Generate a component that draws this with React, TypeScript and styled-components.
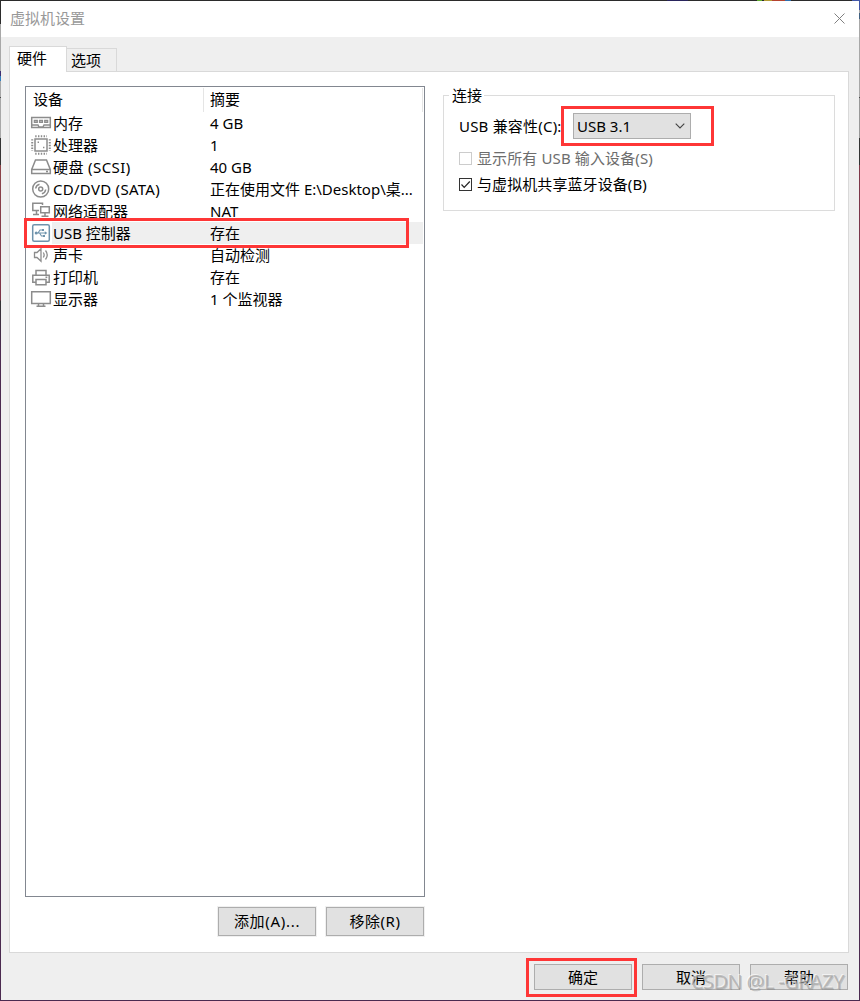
import React from "react";
import styled, { createGlobalStyle, css } from "styled-components";

const Global = createGlobalStyle`
  * { box-sizing: border-box; }
  html, body { margin: 0; padding: 0; }
  body {
    font-family: "Noto Sans", "Noto Sans CJK SC", sans-serif;
    font-size: 15px;
    line-height: 22px;
    color: #000;
    overflow: hidden;
  }
`;

const Desktop = styled.div`
  width: 860px;
  height: 1001px;
  padding: 1px;
  background:
    linear-gradient(90deg, #2b2b2b 0 667px, #29245c 667px 688px, #2b2b2b 688px 757px, #5fae2e 757px 762px, #2b2b2b 762px 764px, #b39a35 764px 772px, #b5432f 772px 785px, #2f6fae 785px 791px, #2b2b2b 791px 852px, #4257a8 852px) top / 100% 1px no-repeat,
    linear-gradient(180deg, #2b2b2b 0 24px, #a8a8a8 24px 71px, #3b2f72 71px 76px, #2f7fc0 76px 81px, #a8a8a8 81px 97px, #4a4a4a 97px 98px, #a8a8a8 98px 138px, #333 138px 165px, #8c4348 165px, #7d3448 300px, #333 301px, #4b2a50 350px) left / 1px 100% no-repeat,
    linear-gradient(180deg, #4257a8 0 10px, #a8a8a8 10px 13px, #3f5f80 13px 19px, #a8a8a8 19px 97px, #4a4a4a 97px 98px, #999 98px 138px, #333 138px 165px, #7f3848 165px, #6d3050 400px, #4b2a50 600px) right / 1px 100% no-repeat,
    #4b2a50;
`;

const Dialog = styled.main`
  display: flex;
  flex-direction: column;
  width: 858px;
  height: 999px;
  background: #efefef;
`;

const TitleBar = styled.header`
  display: flex;
  align-items: center;
  justify-content: space-between;
  height: 36px;
  padding: 0 14px 2px 9px;
  background: #fff;
  color: #999;
`;

const CloseIcon = styled.svg`
  width: 11px;
  height: 11px;
  stroke: #808080;
  fill: none;
`;

const TabStrip = styled.nav`
  display: flex;
  align-items: flex-end;
  height: 34px;
  padding-left: 8px;
`;

const Tab = styled.div<{ $active?: boolean }>`
  border: 1px solid #d9d9d9;
  border-bottom: 0;
  ${(p) =>
    p.$active
      ? css`
          width: 58px;
          height: 26px;
          margin-bottom: -1px;
          padding: 0 0 0 7px;
          background: #fff;
          z-index: 1;
        `
      : css`
          width: 51px;
          height: 23px;
          margin-left: -1px;
          padding: 0 0 0 4px;
          background: #efefef;
        `}
`;

const Pane = styled.section`
  display: flex;
  align-items: flex-start;
  gap: 18px;
  width: 840px;
  height: 882px;
  margin-left: 8px;
  padding: 14px 13px 0 15px;
  border: 1px solid #d9d9d9;
  background: #fff;
`;

const DeviceColumn = styled.div`
  width: 400px;
`;

const DeviceList = styled.div`
  height: 811px;
  padding: 1px;
  border: 1px solid #828790;
`;

const ListHead = styled.div`
  display: grid;
  grid-template-columns: 177px 219px;
  height: 24px;
  line-height: 22px;
`;

const HeadCell = styled.div`
  padding-left: 6px;
  border-right: 1px solid #e5e5e5;
`;

const DeviceRow = styled.div`
  position: relative;
  display: grid;
  grid-template-columns: 25px 152px 219px;
  height: 22px;
  white-space: nowrap;
`;

const Cell = styled.div<{ $on?: boolean; $pad: number }>`
  height: 22px;
  padding-left: ${(p) => p.$pad}px;
  line-height: 22px;
  background: ${(p) => (p.$on ? "#efefef" : "transparent")};
`;

const DeviceIcon = styled.svg`
  width: 22px;
  height: 22px;
  margin-left: 3px;
  fill: none;
  stroke: #8c8c8c;
  stroke-width: 1.5;
`;

const Run = styled.span<{ $ls?: number }>`
  letter-spacing: ${(p) => p.$ls ?? 0}px;
  white-space: pre;
`;

const Highlight = styled.i<{ $x: number; $y: number; $w: number; $h: number }>`
  position: absolute;
  left: ${(p) => p.$x}px;
  top: ${(p) => p.$y}px;
  width: ${(p) => p.$w}px;
  height: ${(p) => p.$h}px;
  border: 3px solid #fe3636;
  z-index: 2;
  pointer-events: none;
`;

const ButtonRow = styled.div<{ $top: number; $right: number }>`
  display: flex;
  justify-content: flex-end;
  gap: 10px;
  padding-top: ${(p) => p.$top}px;
  padding-right: ${(p) => p.$right}px;
`;

const Button = styled.button<{ $h: number; $halo?: boolean }>`
  position: relative;
  display: flex;
  align-items: center;
  justify-content: center;
  width: 98px;
  height: ${(p) => p.$h}px;
  padding: 0 0 ${(p) => (p.$halo ? 2 : 0)}px;
  border: 1px solid #adadad;
  background: #e1e1e1;
  color: #000;
  font: inherit;
  box-shadow: ${(p) => (p.$halo ? "0 0 0 1px #f0f0f0" : "none")};
`;

const Group = styled.fieldset`
  width: 392px;
  height: 127px;
  margin: -2px 0 0;
  padding: 0 0 0 15px;
  border: 1px solid #dcdcdc;
  min-width: 0;
`;

const Legend = styled.legend`
  margin-left: -10px;
  padding: 0 2px 0 3px;
  height: 22px;
`;

const Field = styled.div`
  position: relative;
  display: flex;
  align-items: center;
  justify-content: space-between;
  width: 232px;
  height: 26px;
  margin-top: 7px;
`;

const Select = styled.div`
  display: flex;
  align-items: center;
  justify-content: space-between;
  width: 118px;
  height: 26px;
  padding: 0 5px 0 3px;
  border: 1px solid #adadad;
  background: #e1e1e1;
`;

const SelectValue = styled.span`
  padding-bottom: 1px;
`;

const Chevron = styled.svg`
  width: 10px;
  height: 6px;
  fill: none;
  stroke: #444;
  stroke-width: 1.1;
`;

const Option = styled.label<{ $off?: boolean }>`
  display: flex;
  align-items: center;
  gap: 5px;
  height: 26px;
  white-space: nowrap;
  color: ${(p) => (p.$off ? "#6d6d6d" : "#000")};
`;

const Box = styled.svg`
  width: 13px;
  height: 13px;
  fill: #fff;
`;

const Options = styled.div`
  padding-top: 6px;
`;

const Watermark = styled.div`
  position: absolute;
  left: 691px;
  top: 967px;
  font-size: 20px;
  line-height: 30px;
  letter-spacing: -0.6px;
  color: rgba(160, 160, 160, 0.65);
  text-shadow: -1px -1px 0 rgba(255, 255, 255, 0.6), 1px 1px 0 rgba(110, 110, 110, 0.3);
  white-space: pre;
`;

const icons: Record<string, React.ReactNode> = {
  memory: (
    <>
      <path d="M1.7 5.5H20.3V15.5H1.7ZM2 13H8L9 15H13L14 13H20" />
      <path fill="#bbb" strokeWidth="1.2" d="M4.3 8.3H7.3V10.4H4.3ZM9.5 8.3H12.5V10.4H9.5ZM14.7 8.3H17.7V10.4H14.7Z" />
    </>
  ),
  cpu: (
    <>
      <rect x="5" y="5" width="12" height="12" />
      <path strokeDasharray="1.4 1.4" strokeWidth="2" d="M5.2 2.2H17M5.2 19.8H17M2.2 5.2V17M19.8 5.2V17" />
      <path d="M7.6 8.2H9M13 13.4H14.4" />
    </>
  ),
  disk: <path d="M1.7 13.5L5.5 4H16.5L20.3 13.5V17.5H1.7V13.5H20.3M16 15.5H18" />,
  cd: (
    <>
      <circle cx="10.7" cy="11" r="8" />
      <circle cx="10.7" cy="11" r="2" />
      <path d="M5.7 10.5A5 5 0 0 1 9.5 6.2M15.7 11.5A5 5 0 0 1 11.9 15.8" />
    </>
  ),
  net: (
    <path d="M9 10.5H2.8V3.2H12.5V5M6.5 11V14M3 14.5H9M10.7 6.8H19.3V12.7H10.7ZM15 13V15.7M11.5 16.2H18.5" />
  ),
  usb: (
    <g stroke="#6f93ac">
      <rect x="2.7" y="2.7" width="16.6" height="16.6" rx="1.5" />
      <path d="M6 11H16M8 11L10 8H12.5M9.5 11L11.5 14H13.5" strokeWidth="1.1" />
      <path d="M14.8 9.3L17.3 11L14.8 12.7Z" fill="#6f93ac" stroke="none" />
      <circle cx="6.2" cy="11" r="1.5" fill="#6f93ac" stroke="none" />
      <path d="M12 7H14V9H12ZM13 13H15V15H13Z" fill="#6f93ac" stroke="none" />
    </g>
  ),
  sound: (
    <path strokeWidth="1.3" d="M4.5 8.5H7L11 4.8V17.2L7 13.5H4.5ZM13.3 8.5Q15 11 13.3 13.5M15.5 6.5Q19 11 15.5 15.5" />
  ),
  printer: (
    <path d="M6 9V4.5H16V9M5.5 16.2H2.8V9.2H19.2V16.2H16.5M6 13.5H16V18.8H6ZM15.5 11.3H17.3" />
  ),
  display: <path d="M1.7 3.7H20.3V15.5H1.7ZM6.5 18.3H15.5M8.5 16V18M13.5 16V18" />,
};

type Device = { id: string; name: string; summary: string; spacing?: number };

const devices: Device[] = [
  { id: "memory", name: "内存", summary: "4 GB" },
  { id: "cpu", name: "处理器", summary: "1" },
  { id: "disk", name: "硬盘 (SCSI)", summary: "40 GB", spacing: 0.4 },
  { id: "cd", name: "CD/DVD (SATA)", summary: "正在使用文件 E:\\Desktop\\桌...", spacing: 0.28 },
  { id: "net", name: "网络适配器", summary: "NAT" },
  { id: "usb", name: "USB 控制器", summary: "存在" },
  { id: "sound", name: "声卡", summary: "自动检测" },
  { id: "printer", name: "打印机", summary: "存在" },
  { id: "display", name: "显示器", summary: "1 个监视器" },
];

export default function App() {
  return (
    <Desktop>
      <Global />
      <Dialog>
        <TitleBar>
          <span>虚拟机设置</span>
          <CloseIcon viewBox="0 0 11 11">
            <path d="M.5 .5L10.5 10.5M10.5 .5L.5 10.5" />
          </CloseIcon>
        </TitleBar>
        <TabStrip>
          <Tab $active>硬件</Tab>
          <Tab>选项</Tab>
        </TabStrip>
        <Pane>
          <DeviceColumn>
            <DeviceList>
              <ListHead>
                <HeadCell>设备</HeadCell>
                <HeadCell>摘要</HeadCell>
              </ListHead>
              {devices.map(({ id, name, summary, spacing }) => (
                <DeviceRow key={id}>
                  <DeviceIcon viewBox="0 0 22 22">{icons[id]}</DeviceIcon>
                  <Cell $on={id === "usb"} $pad={1}><Run $ls={spacing}>{name}</Run></Cell>
                  <Cell $on={id === "usb"} $pad={6}><Run>{summary}</Run></Cell>
                  {id === "usb" && <Highlight $x={-3} $y={-4} $w={385} $h={30} />}
                </DeviceRow>
              ))}
            </DeviceList>
            <ButtonRow $top={10} $right={1}>
              <Button $h={29} $halo><Run $ls={0.7}>添加(A)...</Run></Button>
              <Button $h={29} $halo><Run $ls={0.5}>移除(R)</Run></Button>
            </ButtonRow>
          </DeviceColumn>
          <Group>
            <Legend>连接</Legend>
            <Field>
              <Run $ls={0.2}>USB 兼容性(C):</Run>
              <Select>
                <SelectValue>USB 3.1</SelectValue>
                <Chevron viewBox="0 0 10 6"><path d="M.7 .7L5 5L9.3 .7" /></Chevron>
              </Select>
              <Highlight $x={102} $y={-7} $w={153} $h={40} />
            </Field>
            <Options>
              <Option $off>
                <Box viewBox="0 0 13 13"><rect x=".5" y=".5" width="12" height="12" stroke="#ccc" /></Box>
                <Run $ls={0.12}>显示所有 USB 输入设备(S)</Run>
              </Option>
              <Option>
                <Box viewBox="0 0 13 13">
                  <rect x=".5" y=".5" width="12" height="12" stroke="#333" />
                  <path d="M2.5 6.5L5.2 9.3L10.8 3.5" fill="none" stroke="#222" strokeWidth="1.2" />
                </Box>
                <Run $ls={0.08}>与虚拟机共享蓝牙设备(B)</Run>
              </Option>
            </Options>
          </Group>
        </Pane>
        <ButtonRow $top={11} $right={11}>
          <Button $h={26}>
            确定
            <Highlight $x={-9} $y={-7} $w={111} $h={39} />
          </Button>
          <Button $h={26}>取消</Button>
          <Button $h={26}>帮助</Button>
        </ButtonRow>
      </Dialog>
      <Watermark>CSDN @L -GRAZY</Watermark>
    </Desktop>
  );
}
